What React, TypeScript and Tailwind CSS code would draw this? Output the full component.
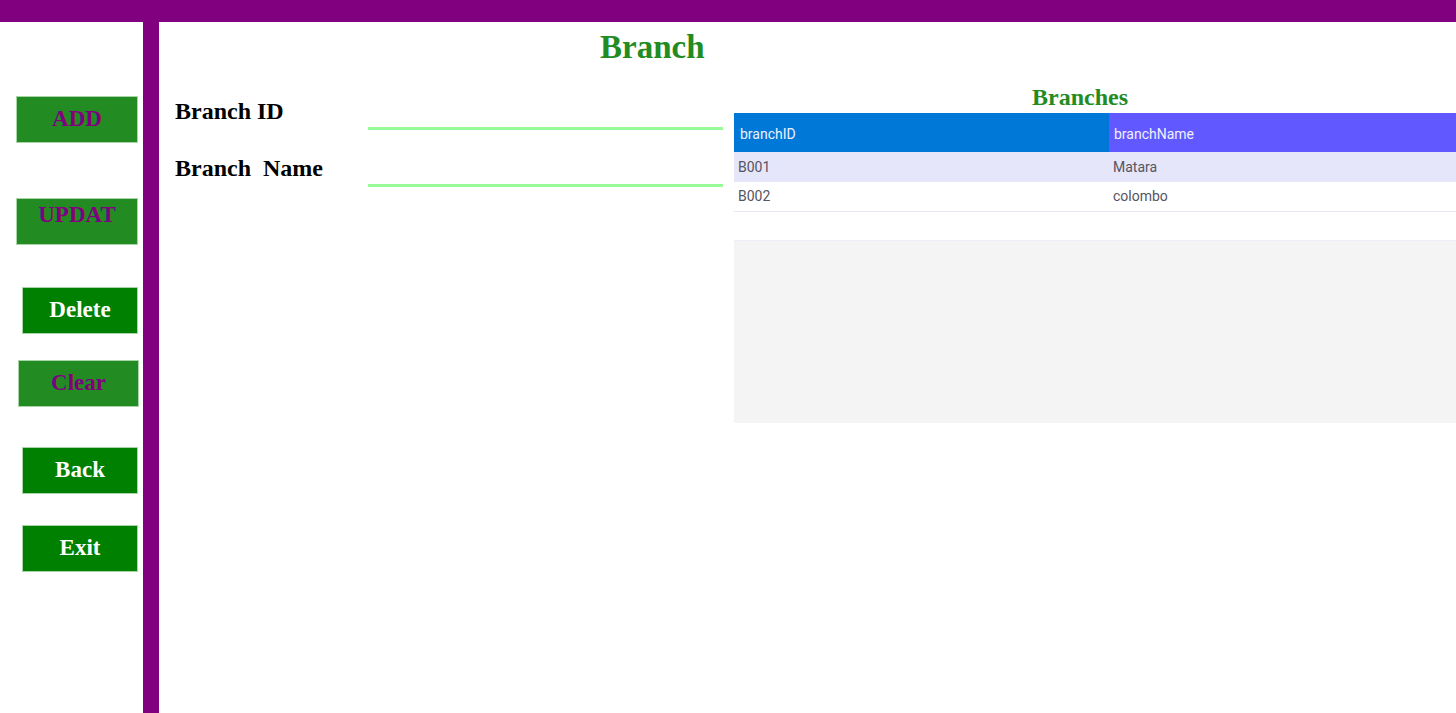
import React from 'react';

const serif = { fontFamily: '"Liberation Serif", "Times New Roman", serif' };
const sans = { fontFamily: 'Roboto, "Liberation Sans", Arial, sans-serif' };

type Btn = { label: string; bg: string; fg: string; cls: string };

const buttons: Btn[] = [
  { label: 'ADD', bg: 'bg-[#228b22]', fg: 'text-[#800080]', cls: 'mt-[74px] w-[122px]' },
  { label: 'UPDAT', bg: 'bg-[#228b22]', fg: 'text-[#800080]', cls: 'mt-[55px] w-[122px] pb-[12px]' },
  { label: 'Delete', bg: 'bg-[#008000]', fg: 'text-white', cls: 'mt-[42px] w-[116px]' },
  { label: 'Clear', bg: 'bg-[#228b22]', fg: 'text-[#800080]', cls: 'mt-[26px] w-[121px] mr-[-1px]' },
  { label: 'Back', bg: 'bg-[#008000]', fg: 'text-white', cls: 'mt-[40px] w-[116px]' },
  { label: 'Exit', bg: 'bg-[#008000]', fg: 'text-white', cls: 'mt-[31px] w-[116px]' },
];

const rows = [
  { id: 'B001', name: 'Matara' },
  { id: 'B002', name: 'colombo' },
];

function Field({ label }: { label: string }) {
  return (
    <div className="flex h-[31px]">
      <div className="w-[193px] text-[24px] leading-[24px] font-bold text-black whitespace-pre" style={serif}>
        {label}
      </div>
      <div className="w-[355px] h-[31px] border-b-[3px] border-[#98fb98]" />
    </div>
  );
}

export default function App() {
  return (
    <div className="h-screen w-full overflow-hidden bg-white flex flex-col">
      <div className="h-[22px] bg-[#800080] shrink-0" />
      <div className="flex flex-1 min-h-0">
        {/* side buttons */}
        <div className="w-[143px] shrink-0 flex flex-col items-end pr-[5px]">
          {buttons.map((b) => (
            <button
              key={b.label}
              className={`${b.cls} ${b.bg} ${b.fg} h-[47px] border border-[#a9d6a9] flex items-center justify-center text-[23px] font-bold`}
              style={serif}
            >
              {b.label}
            </button>
          ))}
        </div>
        <div className="w-[16px] shrink-0 bg-[#800080]" />

        {/* main */}
        <div className="flex-1 min-w-0 flex flex-col">
          <h1 className="mt-[9px] pl-[441px] text-[33px] leading-[32px] font-bold text-[#228b22]" style={serif}>
            Branch
          </h1>
          <div className="flex mt-[22px]">
            <div className="w-[575px] shrink-0 pl-[16px] pt-[14px] flex flex-col gap-[26px]">
              <Field label="Branch ID" />
              <Field label="Branch  Name" />
            </div>

            <div className="flex-1 min-w-0">
              <h2 className="pl-[298px] text-[24px] leading-[24px] font-bold text-[#228b22]" style={serif}>
                Branches
              </h2>
              <div className="mt-[4px] w-full text-[14px]" style={sans}>
                <div className="flex h-[39px] text-[#f0f0ff]">
                  <div className="w-[375px] bg-[#0078d7] pl-[6px] pt-[3px] flex items-center">branchID</div>
                  <div className="flex-1 bg-[#6159ff] pl-[5px] pt-[3px] flex items-center">branchName</div>
                </div>
                {rows.map((r, i) => (
                  <div
                    key={r.id}
                    className={`flex h-[30px] text-[#545462] ${i === 0 ? 'bg-[#e6e6fa]' : 'bg-white border-b border-[#e6e6fa]'}`}
                  >
                    <div className="w-[375px] pl-[4px] flex items-center">{r.id}</div>
                    <div className="flex-1 pl-[4px] flex items-center">{r.name}</div>
                  </div>
                ))}
                <div className="h-[29px] bg-white border-b border-[#ececfb]" />
                <div className="h-[182px] bg-[#f4f4f4]" />
              </div>
            </div>
          </div>
        </div>
      </div>
    </div>
  );
}
